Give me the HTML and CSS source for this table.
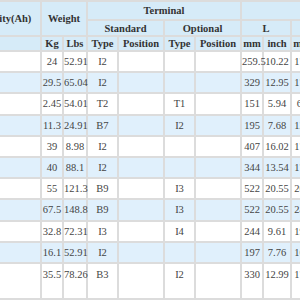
FILE: index.html
```html
<!DOCTYPE html>
<html>
<head>
<meta charset="utf-8">
<link rel="stylesheet" href="styles.css">
</head>
<body>
<table class="spec">
  <colgroup>
    <col class="c-cap">
    <col class="c-kg">
    <col class="c-lbs">
    <col class="c-type">
    <col class="c-pos">
    <col class="c-type2">
    <col class="c-pos">
    <col class="c-mm">
    <col class="c-inch">
    <col class="c-mm">
    <col class="c-inch">
  </colgroup>
  <thead>
    <tr class="h1">
      <th rowspan="2">Capacity(Ah)</th>
      <th rowspan="2" colspan="2">Weight</th>
      <th colspan="4">Terminal</th>
      <th colspan="4"></th>
    </tr>
    <tr class="h2">
      <th colspan="2">Standard</th>
      <th colspan="2">Optional</th>
      <th colspan="2">L</th>
      <th colspan="2">W</th>
    </tr>
    <tr class="h3">
      <th></th>
      <th>Kg</th><th>Lbs</th><th>Type</th><th>Position</th><th>Type</th><th>Position</th><th>mm</th><th>inch</th><th>mm</th><th>inch</th>
    </tr>
  </thead>
  <tbody>
    <tr><td></td><td>24</td><td>52.91</td><td>I2</td><td></td><td></td><td></td><td>259.5</td><td>10.22</td><td>170</td><td>6.69</td></tr>
    <tr class="alt"><td></td><td>29.5</td><td>65.04</td><td>I2</td><td></td><td></td><td></td><td>329</td><td>12.95</td><td>174</td><td>6.85</td></tr>
    <tr><td></td><td>2.45</td><td>54.01</td><td>T2</td><td></td><td>T1</td><td></td><td>151</td><td>5.94</td><td>65</td><td>2.56</td></tr>
    <tr class="alt"><td></td><td>11.3</td><td>24.91</td><td>B7</td><td></td><td>I2</td><td></td><td>195</td><td>7.68</td><td>128</td><td>5.04</td></tr>
    <tr><td></td><td>39</td><td>8.98</td><td>I2</td><td></td><td></td><td></td><td>407</td><td>16.02</td><td>173</td><td>6.81</td></tr>
    <tr class="alt"><td></td><td>40</td><td>88.1</td><td>I2</td><td></td><td></td><td></td><td>344</td><td>13.54</td><td>172</td><td>6.77</td></tr>
    <tr><td></td><td>55</td><td>121.3</td><td>B9</td><td></td><td>I3</td><td></td><td>522</td><td>20.55</td><td>209</td><td>8.23</td></tr>
    <tr class="alt"><td></td><td>67.5</td><td>148.8</td><td>B9</td><td></td><td>I3</td><td></td><td>522</td><td>20.55</td><td>240</td><td>9.45</td></tr>
    <tr><td></td><td>32.8</td><td>72.31</td><td>I3</td><td></td><td>I4</td><td></td><td>244</td><td>9.61</td><td>190</td><td>7.48</td></tr>
    <tr class="alt"><td></td><td>16.1</td><td>52.91</td><td>I2</td><td></td><td></td><td></td><td>197</td><td>7.76</td><td>166</td><td>6.54</td></tr>
    <tr class="last"><td></td><td>35.5</td><td>78.26</td><td>B3</td><td></td><td>I2</td><td></td><td>330</td><td>12.99</td><td>171</td><td>6.73</td></tr>
  </tbody>
</table>
</body>
</html>
```
FILE: styles.css
```css
html, body {
  margin: 0;
  padding: 0;
  background: #ffffff;
  overflow: hidden;
}

.spec {
  margin-left: -40px;
  border-collapse: collapse;
  table-layout: fixed;
  width: 380px;
  font-family: "Liberation Serif", "Times New Roman", serif;
  font-size: 10.5px;
  color: #444;
}

.c-cap { width: 80px; }
.c-kg { width: 22px; }
.c-lbs { width: 24px; }
.c-type { width: 31px; }
.c-pos { width: 46px; }
.c-type2 { width: 31px; }
.c-mm { width: 22px; }
.c-inch { width: 28px; }

.spec th,
.spec td {
  border: 2px solid #dcdcdc;
  padding: 0;
  text-align: center;
  white-space: nowrap;
  overflow: visible;
}

.spec th {
  background: #d6ebf8;
  color: #333;
  font-weight: bold;
}

.h1 { height: 19px; }
.h2 { height: 16px; }
.h3 { height: 15px; }

.spec tbody tr { height: 21.2px; }
.spec tbody tr.alt td { background: #e0f0fc; }
.spec tbody tr.last { height: 36px; }
.spec tbody tr.last td {
  vertical-align: top;
  padding-top: 5px;
}
```
